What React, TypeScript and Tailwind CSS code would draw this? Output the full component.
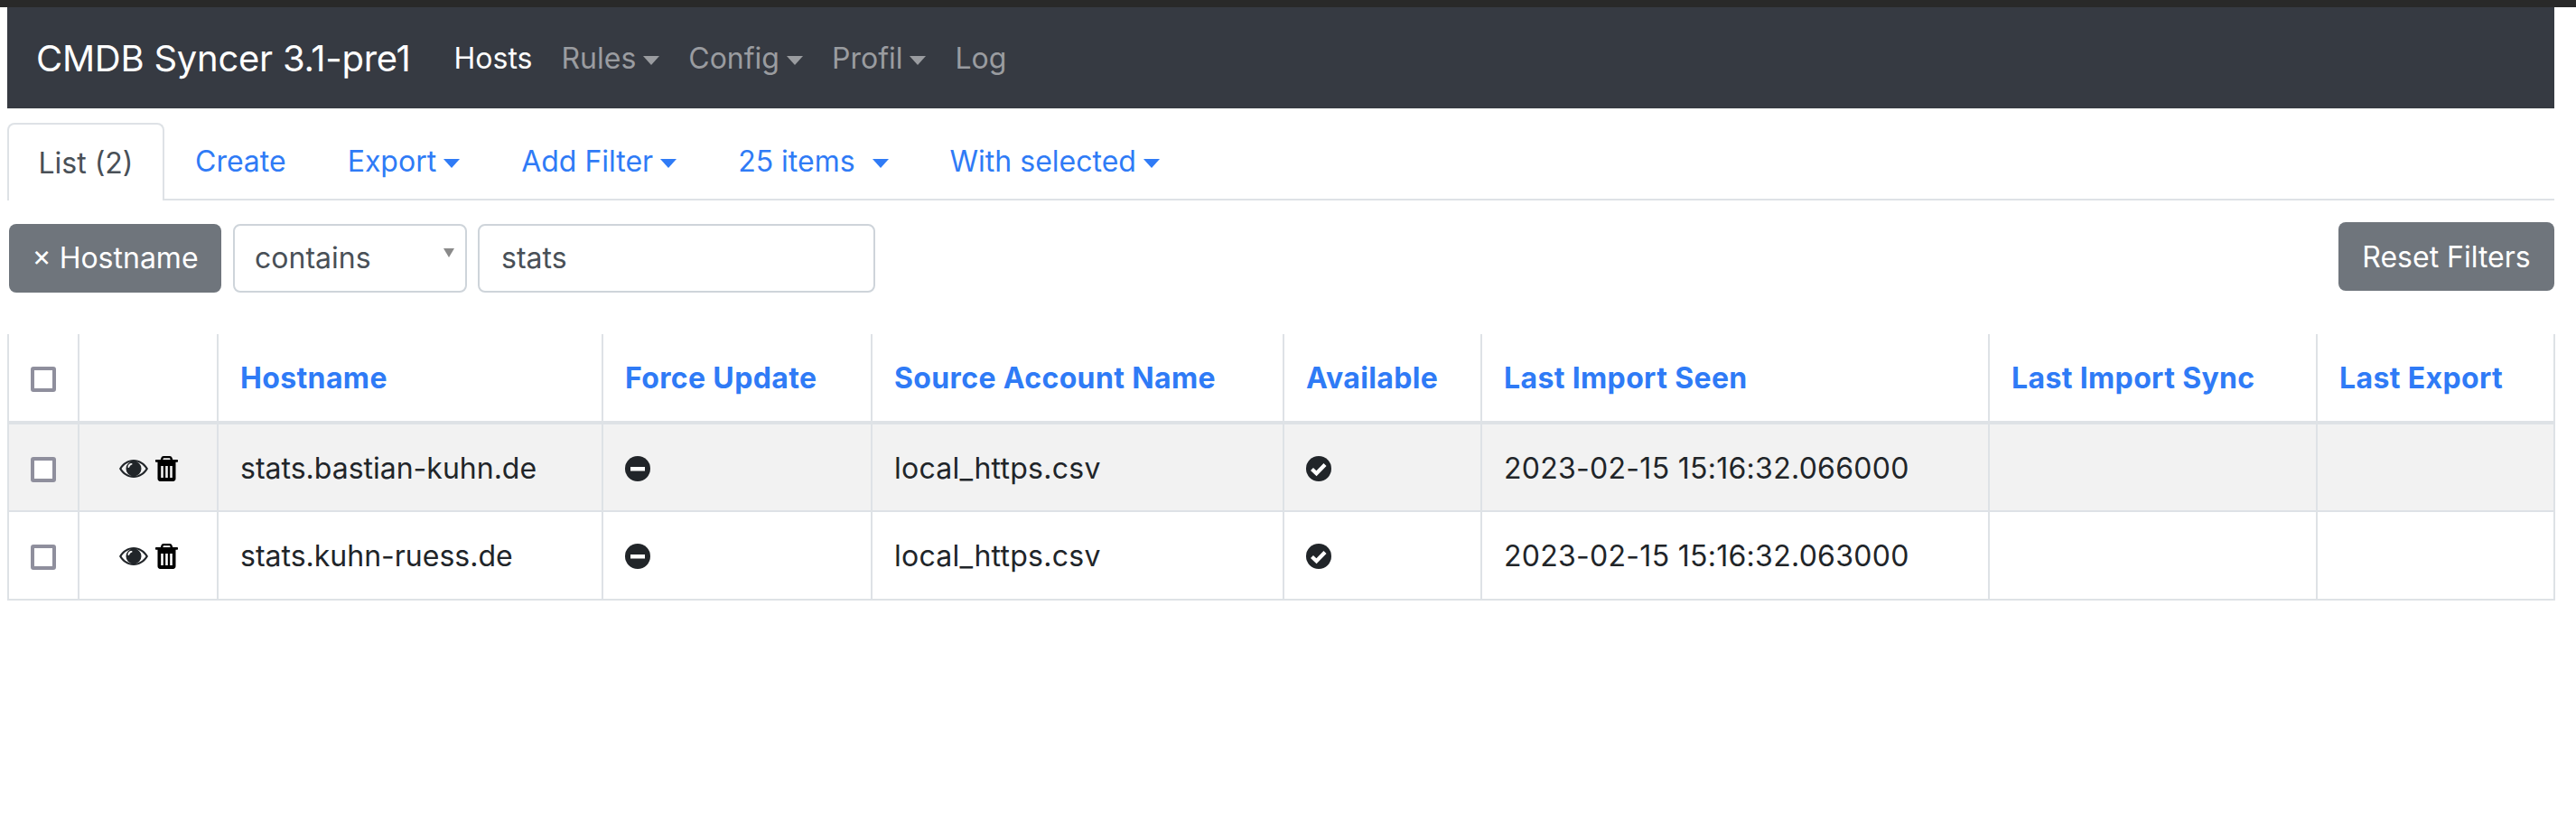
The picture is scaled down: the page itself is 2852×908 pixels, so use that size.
import React from 'react';

const mainFont = "font-['Inter','Noto_Sans',sans-serif]";

const columns = [
  { label: '', width: 'w-[78px]' },
  { label: '', width: 'w-[154px]' },
  { label: 'Hostname', width: 'w-[426px]' },
  { label: 'Force Update', width: 'w-[298px]' },
  { label: 'Source Account Name', width: 'w-[456px]' },
  { label: 'Available', width: 'w-[219px]' },
  { label: 'Last Import Seen', width: 'w-[562px]' },
  { label: 'Last Import Sync', width: 'w-[363px]' },
  { label: 'Last Export', width: 'w-[263px]' },
];

const rows = [
  { host: 'stats.bastian-kuhn.de', seen: '2023-02-15 15:16:32.066000', striped: true },
  { host: 'stats.kuhn-ruess.de', seen: '2023-02-15 15:16:32.063000', striped: false },
];

function Caret({ className = 'ml-2' }: { className?: string }) {
  return (
    <span
      className={`inline-block align-[4px] border-t-[10px] border-x-[9px] border-x-transparent border-t-current ${className}`}
    />
  );
}

function EyeIcon() {
  return (
    <svg viewBox="0 0 32 20" className="w-8 h-5 text-[#212529]" fill="currentColor">
      <path
        fillRule="evenodd"
        d="M16 0C9.500 0 3.500 3.800 0 10c3.500 6.200 9.500 10 16 10s12.500-3.800 16-10C28.500 3.800 22.500 0 16 0ZM16 2c5.400 0 10.300 3.100 13.500 8-3.200 4.900-8.100 8-13.500 8S5.700 14.900 2.500 10C5.700 5.100 10.600 2 16 2Z"
      />
      <path
        fillRule="evenodd"
        d="M16 1.500a8.500 8.500 0 1 0 0 17 8.500 8.500 0 0 0 0-17ZM13.500 4c.6 0 1 .4 1 1s-1.800 1-2.600 2c-.6.800-.6 2-1.400 2-.6 0-1-.4-1-1 0-2.200 1.800-4 4-4Z"
      />
    </svg>
  );
}

function TrashIcon() {
  return (
    <svg viewBox="0 0 25 28" className="w-[25px] h-7 text-black" fill="currentColor">
      <path
        fillRule="evenodd"
        d="M9 0h7c1.200 0 2.200.8 2.600 2l.7 2H24c.6 0 1 .4 1 1v.8c0 .6-.4 1-1 1h-1.500V25c0 1.600-1.200 3-2.700 3H5.200c-1.500 0-2.700-1.400-2.700-3V6.800H1c-.6 0-1-.4-1-1V5c0-.6.4-1 1-1h4.700l.7-2C6.800.8 7.800 0 9 0ZM9 2.200L8.300 4h8.400L16 2.200ZM6.200 11v13h2.600V11ZM11.200 11v13h2.600V11ZM16.200 11v13h2.600V11Z"
      />
    </svg>
  );
}

function MinusCircleIcon() {
  return (
    <svg viewBox="0 0 28 28" className="w-7 h-7 text-[#212529]">
      <circle cx="14" cy="14" r="14" fill="currentColor" />
      <rect x="6" y="12" width="16" height="4.500" fill="#ffffff" />
    </svg>
  );
}

function CheckCircleIcon() {
  return (
    <svg viewBox="0 0 28 28" className="w-7 h-7 text-[#212529]">
      <circle cx="14" cy="14" r="14" fill="currentColor" />
      <path d="M6.500 14.500l5 4.700 9.500-9.700" fill="none" stroke="#ffffff" strokeWidth="4.300" />
    </svg>
  );
}

function Checkbox() {
  return (
    <span className="block mx-auto mt-0.5 w-7 h-7 rounded-[3px] border-[4px] border-[#8f8f9d] bg-white" />
  );
}

export default function App() {
  return (
    <div className={`min-h-[908px] bg-white text-[32px] leading-[48px] text-[#212529] ${mainFont}`}>
      <div className="h-2 bg-[#292929]" />
      <div className="pl-2 pr-6">
        <nav className="h-[112px] bg-[#363a42] flex items-center pl-8 pt-px text-[#9a9ca0]">
          <span className="text-[40px] tracking-[-0.25px] text-white mr-12">CMDB Syncer 3.1-pre1</span>
          <div className="flex items-center gap-8">
            <span className="text-white">Hosts</span>
            <span>Rules<Caret /></span>
            <span>Config<Caret /></span>
            <span>Profil<Caret /></span>
            <span>Log</span>
          </div>
        </nav>

        <div className="mt-4 h-[86px] flex border-b-2 border-[#dee2e6] text-[#2f7bf6]">
          <div className="w-[174px] h-[86px] flex items-center justify-center pt-px rounded-t-lg border-2 border-b-0 border-[#dee2e6] bg-white text-[#495057]">
            List (2)
          </div>
          <div className="flex items-center gap-[68px] pl-[34px] pt-px">
            <span>Create</span>
            <span>Export<Caret /></span>
            <span>Add Filter<Caret /></span>
            <span>25 items<Caret className="ml-[19px]" /></span>
            <span>With selected<Caret /></span>
          </div>
        </div>

        <div className="mt-6 h-[80px] flex items-start">
          <button className="ml-0.5 mt-0.5 h-[76px] w-[235px] rounded-lg bg-[#6f757c] text-white">
            × Hostname
          </button>
          <div className="ml-[13px] mt-0.5 h-[76px] w-[259px] rounded-lg border-2 border-[#ced4da] flex items-center justify-between pl-[22px] pr-3 text-[#495057]">
            <span>contains</span>
            <span className="mb-3 border-t-[10px] border-x-[6px] border-x-transparent border-t-[#8a8a8a]" />
          </div>
          <div className="ml-3 mt-0.5 h-[76px] w-[440px] rounded-lg border-2 border-[#ced4da] flex items-center pl-6 text-[#495057]">
            stats
          </div>
          <button className="ml-auto pt-0.5 h-[76px] w-[239px] rounded-lg bg-[#6f757c] text-white">
            Reset Filters
          </button>
        </div>

        <table className="mt-11 table-fixed border-collapse w-[2820px]">
          <thead>
            <tr className="h-[98px]">
              {columns.map((col, i) => (
                <th
                  key={i}
                  className={`${col.width} px-6 pt-0.5 text-left font-bold tracking-[0.36px] text-[#2f7bf6] border-x-2 border-b-[4px] border-[#dee2e6]`}
                >
                  {i === 0 ? <Checkbox /> : col.label}
                </th>
              ))}
            </tr>
          </thead>
          <tbody>
            {rows.map((row) => (
              <tr key={row.host} className={`h-[98px] ${row.striped ? 'bg-[#f2f2f2]' : 'bg-white'}`}>
                <td className="px-6 pt-0.5 border-2 border-[#dee2e6]">
                  <Checkbox />
                </td>
                <td className="pt-0.5 border-2 border-[#dee2e6]">
                  <div className="flex items-center justify-center gap-2">
                    <EyeIcon />
                    <TrashIcon />
                  </div>
                </td>
                <td className="px-6 pt-0.5 border-2 border-[#dee2e6]">{row.host}</td>
                <td className="px-6 pt-0.5 border-2 border-[#dee2e6]">
                  <MinusCircleIcon />
                </td>
                <td className="px-6 pt-0.5 tracking-[0.25px] border-2 border-[#dee2e6]">local_https.csv</td>
                <td className="px-6 pt-0.5 border-2 border-[#dee2e6]">
                  <CheckCircleIcon />
                </td>
                <td className="px-6 pt-0.5 tracking-[0.28px] border-2 border-[#dee2e6]">{row.seen}</td>
                <td className="px-6 border-2 border-[#dee2e6]" />
                <td className="px-6 border-2 border-[#dee2e6]" />
              </tr>
            ))}
          </tbody>
        </table>
      </div>
    </div>
  );
}
